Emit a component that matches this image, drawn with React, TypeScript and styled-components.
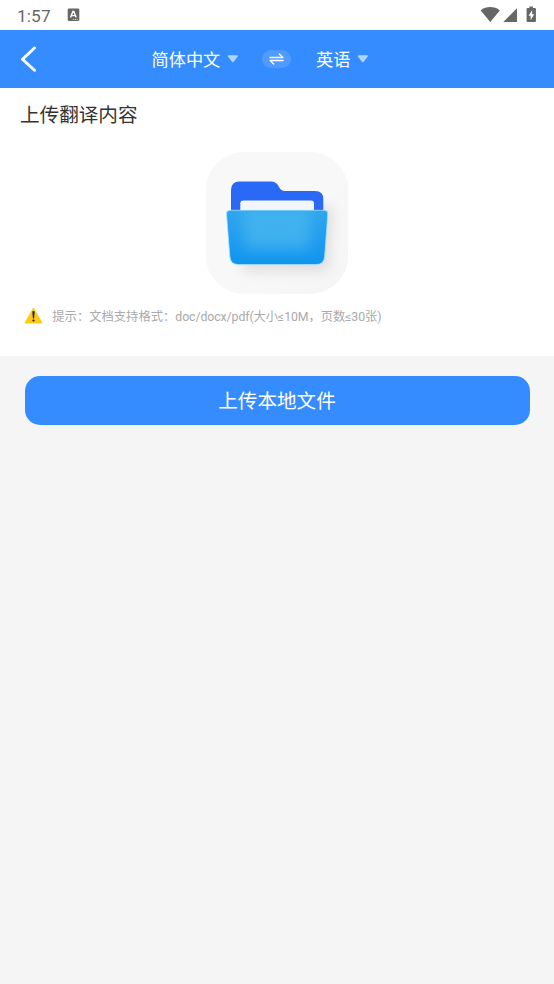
import React from 'react';
import styled, { createGlobalStyle } from 'styled-components';

const GlobalStyle = createGlobalStyle`
  * { box-sizing: border-box; }
  body {
    margin: 0;
    background: #f5f5f5;
    font-family: Roboto, "Noto Sans CJK SC", sans-serif;
  }
`;

const Page = styled.div`
  display: flex;
  flex-direction: column;
  min-height: 984px;
  background: #f5f5f5;
`;

const StatusBar = styled.div`
  display: flex;
  align-items: flex-start;
  height: 29.5px;
  padding: 0 17px;
  background: #fff;
  color: #666;
`;

const Clock = styled.span`
  width: 50px;
  font-size: 17.3px;
  line-height: 32px;
  letter-spacing: 0.1px;
`;

const StatusIcons = styled.div`
  margin-left: auto;
`;

const Header = styled.header`
  display: flex;
  align-items: center;
  height: 58.5px;
  padding-left: 20px;
  background: #358cff;
`;

const BackButton = styled.button`
  display: flex;
  width: 131.5px;
  padding: 0;
  border: 0;
  background: none;
`;

const Language = styled.button<{ $width: number }>`
  display: flex;
  align-items: center;
  gap: 6.5px;
  width: ${(p) => p.$width}px;
  padding: 0;
  border: 0;
  background: none;
  color: #fff;
  font: 17.2px/26px Roboto, "Noto Sans CJK SC", sans-serif;
  white-space: nowrap;
`;

const LanguageName = styled.span`
  padding-top: 1.5px;
`;

const SwapButton = styled.button`
  display: flex;
  align-items: center;
  justify-content: center;
  width: 29px;
  height: 18px;
  margin-right: 25px;
  padding: 0;
  border: 0;
  border-radius: 9px;
  background: #4f9bff;
`;

const UploadPanel = styled.section`
  display: flex;
  flex-direction: column;
  height: 268px;
  background: #fff;
`;

const Title = styled.h1`
  margin: 13px 0 0 20px;
  color: #333;
  font-size: 19.6px;
  font-weight: 400;
  line-height: 30px;
`;

const FolderTile = styled.div`
  width: 142px;
  height: 142px;
  margin: 21px auto 0;
  border-radius: 38px;
  background: #f7f7f7;
  overflow: hidden;
`;

const Hint = styled.p`
  display: flex;
  align-items: center;
  gap: 9.3px;
  height: 20px;
  margin: 12px 0 0 24px;
  color: #aaa;
  font-size: 12.3px;
  line-height: 20px;
  white-space: nowrap;
`;

const HintText = styled.span`
  padding-top: 1px;
`;

const Formats = styled.span`
  letter-spacing: -0.08px;
`;

const UploadButton = styled.button`
  height: 49px;
  margin: 20px 24.5px 0;
  padding: 0;
  border: 0;
  border-radius: 15px;
  background: #358cff;
  color: #fff;
  font: 19.6px/47px Roboto, "Noto Sans CJK SC", sans-serif;
  padding-top: 2px;
`;

const Icon = styled.svg`
  display: block;
  flex: none;
`;

const KeyboardIcon = () => (
  <Icon width="13" height="30" viewBox="0 0 13 30">
    <rect x="0.7" y="8.5" width="11.6" height="12.6" rx="1.3" fill="#666" />
    <path d="M3.500 17.500 5.900 11.400h.9l2.400 6.100M4.500 15.600h3.800" fill="none" stroke="#fff" strokeWidth="1.400" />
    <path d="M5.800 19.500h1.300M7.800 19.500h1.300M9.700 19.500h1" stroke="#fff" strokeWidth="0.700" />
  </Icon>
);

const DeviceIcons = () => (
  <Icon width="57" height="30" viewBox="480 0 57 30" fill="#666">
    <path d="M480.700 10.400C486 6 494.400 6 499.800 10.400L490.300 22Z" />
    <path d="M517 8.300V22H503.300Z" />
    <path d="M529.400 6.400h3.500v1.500h2q1 0 1 1V21q0 1-1 1h-7.300q-1 0-1-1V8.900q0-1 1-1h1.800Z" />
    <path d="M532.200 10 528.600 15.700h2V20.300l3.600-6h-2Z" fill="#fff" />
  </Icon>
);

const BackIcon = () => (
  <Icon width="17" height="26" viewBox="0 0 17 26">
    <path d="M14.500 2 2.500 13.200 14.500 24.300" fill="none" stroke="#fff" strokeWidth="2.900" strokeLinecap="round" strokeLinejoin="round" />
  </Icon>
);

const Caret = () => (
  <Icon width="12" height="8" viewBox="0 0 12 8">
    <path d="M1.300 .3h9q1 .3.400 1.200L6.500 7q-.7.700-1.400 0L.9 1.500Q.3.600 1.300.3Z" fill="#b2d3ff" />
  </Icon>
);

const SwapIcon = () => (
  <Icon width="15" height="12" viewBox="0 0 15 12" fill="none" stroke="#fff" strokeWidth="1.300" strokeLinecap="round" strokeLinejoin="round">
    <path d="M.9 4.500h13L10.300 1M14.100 7.500H1.100L4.700 11" />
  </Icon>
);

const FolderIcon = () => (
  <Icon width="142" height="142" viewBox="0 0 142 142">
    <defs>
      <linearGradient id="tile" x1="0" y1="0" x2="1" y2="1">
        <stop offset="0" stopColor="#f8f8f8" />
        <stop offset=".55" stopColor="#f8f8f8" />
        <stop offset="1" stopColor="#f5f5f5" />
      </linearGradient>
      <linearGradient id="front" x1="0" y1="0" x2="0" y2="1">
        <stop offset="0" stopColor="#30a6ed" />
        <stop offset=".5" stopColor="#219df0" />
        <stop offset="1" stopColor="#1195ed" />
      </linearGradient>
      <filter id="shadow" x="-30%" y="-30%" width="160%" height="160%">
        <feGaussianBlur stdDeviation="7" />
      </filter>
      <filter id="glow" x="-40%" y="-40%" width="180%" height="180%">
        <feGaussianBlur stdDeviation="7" />
      </filter>
      <clipPath id="frontShape">
        <path d="M24 58.300H118.500Q122 58.300 121.800 62L118.700 104.500Q118 112.600 110 112.600H32.500Q24.500 112.600 23.800 104.500L20.500 62Q20.300 58.300 24 58.300Z" />
      </clipPath>
    </defs>
    <rect width="142" height="142" fill="url(#tile)" />
    <path d="M35 54H127L122 119H36Z" fill="#000" opacity=".1" filter="url(#shadow)" />
    <path d="M25 67V38Q25 29.500 33.500 29.500H65Q70 29.500 72.500 34Q74.500 39 79 39H109Q117.300 39 117.300 47V67Z" fill="#2a68f6" />
    <path d="M34.300 64V51.500Q34.300 48.500 37.300 48.500H105Q108 48.500 108 51.500V64Z" fill="#f2f7ff" />
    <path d="M24 58.300H118.500Q122 58.300 121.800 62L118.700 104.500Q118 112.600 110 112.600H32.500Q24.500 112.600 23.800 104.500L20.500 62Q20.300 58.300 24 58.300Z" fill="url(#front)" stroke="#a7e4ff" strokeWidth=".8" />
    <g clipPath="url(#frontShape)">
      <path d="M36 56H106L103 97H39Z" fill="#48b7ee" opacity=".75" filter="url(#glow)" />
    </g>
  </Icon>
);

const WarningIcon = () => (
  <Icon width="19" height="18" viewBox="0 0 19 18">
    <path d="M9.500 1.900 17.300 15.700H1.700Z" fill="#fccb18" stroke="#fccb18" strokeWidth="1.800" strokeLinejoin="round" />
    <path d="M8.300 4.500q1.200-1 2.400 0L10.100 11.400H8.900Z" fill="#29241b" />
    <circle cx="9.500" cy="13.500" r="1.100" fill="#29241b" />
  </Icon>
);

export default function App() {
  return (
    <>
      <GlobalStyle />
      <Page>
        <StatusBar>
          <Clock>1:57</Clock>
          <KeyboardIcon />
          <StatusIcons><DeviceIcons /></StatusIcons>
        </StatusBar>
        <Header>
          <BackButton aria-label="返回"><BackIcon /></BackButton>
          <Language $width={110.5}><LanguageName>简体中文</LanguageName><Caret /></Language>
          <SwapButton aria-label="交换语言"><SwapIcon /></SwapButton>
          <Language $width={60}><LanguageName>英语</LanguageName><Caret /></Language>
        </Header>
        <UploadPanel>
          <Title>上传翻译内容</Title>
          <FolderTile><FolderIcon /></FolderTile>
          <Hint>
            <WarningIcon />
            <HintText>提示：文档支持格式：<Formats>doc/docx/pdf(大小≤10M，页数≤30张)</Formats></HintText>
          </Hint>
        </UploadPanel>
        <UploadButton>上传本地文件</UploadButton>
      </Page>
    </>
  );
}
